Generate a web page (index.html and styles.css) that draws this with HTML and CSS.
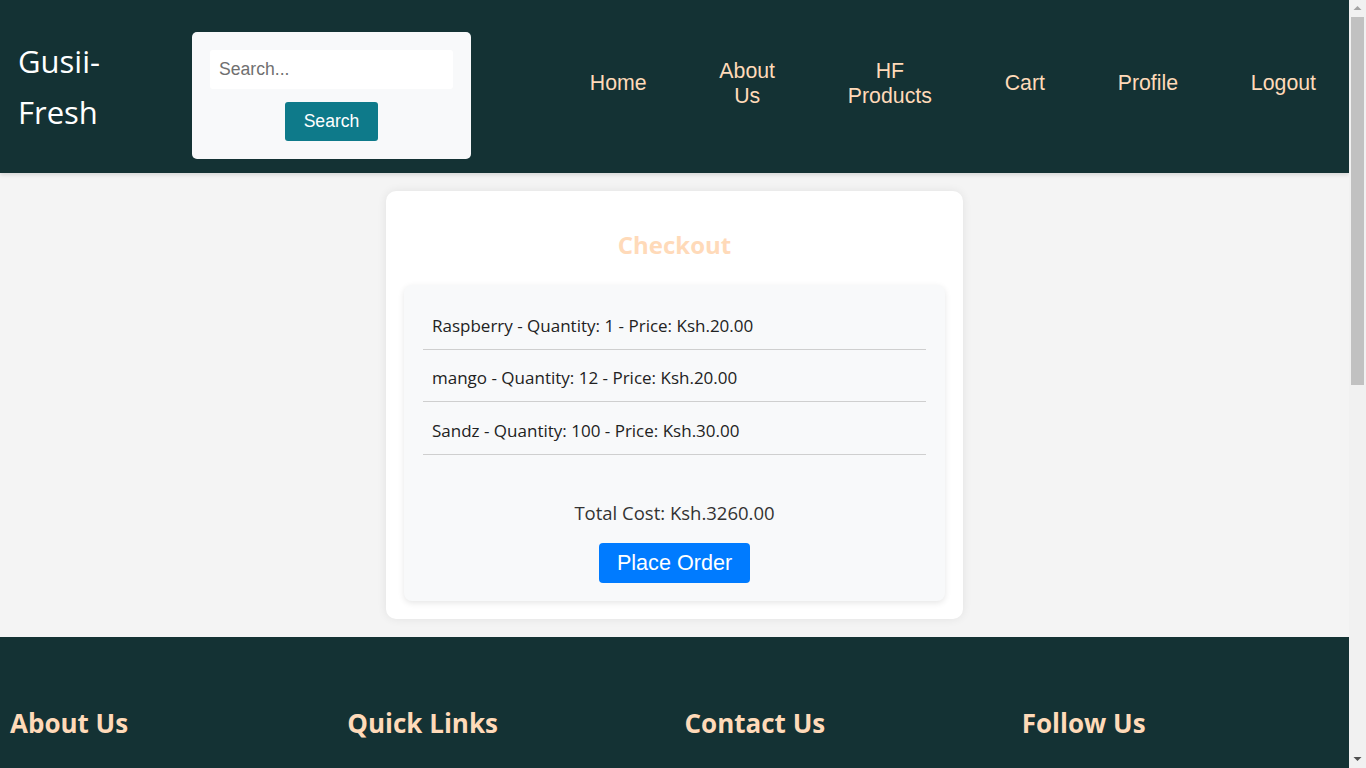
FILE: index.html
```html
<!DOCTYPE html>
<html lang="en">
<head>
<meta charset="UTF-8">
<title>Gusii-Fresh - Checkout</title>
<link rel="stylesheet" href="styles.css">
</head>
<body>
<header class="site-header">
  <div class="logo"><h1 class="logo-text">Gusii-Fresh</h1></div>
  <form class="search-box">
    <input class="search-input" type="text" placeholder="Search...">
    <button class="search-btn" type="button">Search</button>
  </form>
  <nav class="nav">
    <a class="nav-link" href="#">Home</a>
    <a class="nav-link" href="#">About Us</a>
    <a class="nav-link" href="#">HF Products</a>
    <a class="nav-link" href="#">Cart</a>
    <a class="nav-link" href="#">Profile</a>
    <a class="nav-link" href="#">Logout</a>
  </nav>
</header>

<main class="main">
  <section class="card">
    <h2 class="card-title">Checkout</h2>
    <div class="order-box">
      <ul class="order-list">
        <li class="order-item">Raspberry - Quantity: 1 - Price: Ksh.20.00</li>
        <li class="order-item">mango - Quantity: 12 - Price: Ksh.20.00</li>
        <li class="order-item">Sandz - Quantity: 100 - Price: Ksh.30.00</li>
      </ul>
      <p class="total">Total Cost: Ksh.3260.00</p>
      <button class="order-btn" type="button">Place Order</button>
    </div>
  </section>
</main>

<footer class="footer">
  <div class="footer-cols">
    <div class="footer-col">
      <h2 class="footer-title">About Us</h2>
      <p class="footer-text">we bring you the freshest farm produce straight from the farmers of Gusii land to your doorstep, at fair prices.</p>
    </div>
    <div class="footer-col">
      <h2 class="footer-title">Quick Links</h2>
      <ul class="footer-links">
        <li><a href="#">Home</a></li>
        <li><a href="#">About Us</a></li>
        <li><a href="#">HF Products</a></li>
        <li><a href="#">Cart</a></li>
      </ul>
    </div>
    <div class="footer-col">
      <h2 class="footer-title">Contact Us</h2>
      <p class="footer-text">email: info@gusiifresh.co.ke</p>
      <p class="footer-text">phone: +254 700 000 000</p>
      <p class="footer-text">Kisii, Kenya</p>
    </div>
    <div class="footer-col">
      <h2 class="footer-title">Follow Us</h2>
      <ul class="footer-links">
        <li><a href="#">Facebook</a></li>
        <li><a href="#">Twitter</a></li>
        <li><a href="#">Instagram</a></li>
      </ul>
    </div>
  </div>
  <p class="copyright">&copy; 2024 Gusii-Fresh. All rights reserved.</p>
</footer>

<div class="fake-scrollbar" aria-hidden="true">
  <svg class="sb-arrow sb-up" width="17" height="17" viewBox="0 0 17 17"><polygon points="4.5,10 8.5,6 12.5,10" fill="#a3a3a3"/></svg>
  <div class="sb-thumb"></div>
  <svg class="sb-arrow sb-down" width="17" height="17" viewBox="0 0 17 17"><polygon points="4.5,6 12.5,6 8.5,10" fill="#505050"/></svg>
</div>
</body>
</html>
```

FILE: styles.css
```css
* { box-sizing: border-box; }

html, body { margin: 0; padding: 0; }

html { background: #f1f1f1; }

body {
  margin-right: 17px;
  background: #f4f4f4;
  font-family: "Open Sans", "Noto Sans", sans-serif;
  color: #333;
}

.site-header {
  background: #143234;
  height: 173px;
  display: flex;
  align-items: center;
  box-shadow: 0 2px 4px rgba(0, 0, 0, 0.12);
  position: relative;
  z-index: 1;
}

.logo {
  width: 192px;
  padding-left: 18px;
  flex: 0 0 auto;
  align-self: center;
  padding-top: 1px;
}

.logo-text {
  width: min-content;
  margin: 0;
  font-weight: 400;
  font-size: 31px;
  line-height: 51px;
  color: #ffffff;
}

.search-box {
  flex: 0 0 auto;
  width: 279px;
  height: 127px;
  margin-top: 18px;
  background: #f8f9fa;
  border-radius: 5px;
  padding: 18px;
  display: flex;
  flex-direction: column;
  align-items: center;
  gap: 13px;
}

.search-input {
  width: 243px;
  height: 39px;
  border: none;
  border-radius: 3px;
  background: #fff;
  padding: 0 9px;
  font-family: "Liberation Sans", Arial, sans-serif;
  font-size: 17.6px;
  color: #333;
  outline: none;
}

.search-input::placeholder { color: #707070; }

.search-btn {
  height: 39px;
  width: 93px;
  border: none;
  border-radius: 3px;
  background: #0e7a8a;
  color: #fff;
  font-family: "Liberation Sans", Arial, sans-serif;
  font-size: 17.6px;
  padding: 0;
}

.nav {
  flex: 1 1 auto;
  display: flex;
  justify-content: flex-end;
  align-items: center;
  gap: 72.8px;
  padding-right: 33px;
  margin-top: -6px;
}

.nav-link {
  width: min-content;
  text-align: center;
  color: #ffdab9;
  text-decoration: none;
  font-family: "Liberation Sans", Arial, sans-serif;
  font-size: 21.3px;
  line-height: 25px;
}

.main {
  padding: 18px 0;
}

.card {
  width: 577px;
  margin: 0 auto;
  background: #fff;
  border-radius: 10px;
  padding: 18px;
  box-shadow: 0 0 10px rgba(0, 0, 0, 0.08);
}

.card-title {
  margin: 20px 0 24px;
  text-align: center;
  color: #ffdab9;
  font-size: 24px;
  font-weight: 700;
  line-height: 32px;
}

.order-box {
  background: #f8f9fa;
  border-radius: 8px;
  padding: 12px 19px 18px;
  box-shadow: 0 2px 6px rgba(0, 0, 0, 0.1);
  text-align: center;
}

.order-list {
  list-style: none;
  margin: 0 0 46px;
  padding: 0;
  text-align: left;
}

.order-item {
  padding: 16.5px 9px 11px;
  line-height: 24px;
  font-size: 17px;
  border-bottom: 1px solid #cfcfcf;
  color: #222;
}

.total {
  margin: 0 0 18px;
  font-size: 18.5px;
  line-height: 24px;
  color: #333;
}

.order-btn {
  border: none;
  border-radius: 4px;
  background: #007bff;
  color: #fff;
  font-family: "Liberation Sans", Arial, sans-serif;
  font-size: 21.6px;
  line-height: 25px;
  padding: 7px 18px 8px;
}

.footer {
  background: #143234;
  color: #fff;
  padding: 60px 0 40px;
  min-height: 875px;
}

.footer-cols {
  display: flex;
}

.footer-col {
  flex: 1 1 0;
  padding: 10px;
}

.footer-title {
  margin: 0 0 26px;
  color: #ffdab9;
  font-size: 26px;
  font-weight: 700;
  line-height: 32px;
}

.footer-text {
  margin: 0 0 12px;
  font-size: 16px;
  line-height: 24px;
  color: #f0f0f0;
}

.footer-links {
  list-style: none;
  margin: 0;
  padding: 0;
}

.footer-links li { margin-bottom: 10px; }

.footer-links a {
  color: #f0f0f0;
  text-decoration: none;
  font-size: 16px;
  line-height: 24px;
}

.copyright {
  text-align: center;
  margin: 80px 0 0;
  font-size: 14px;
  color: #ddd;
}

.fake-scrollbar {
  position: fixed;
  top: 0;
  right: 0;
  width: 17px;
  height: 100vh;
  background: #f1f1f1;
  z-index: 10;
}

.sb-arrow {
  position: absolute;
  left: 0;
  display: block;
}

.sb-up { top: 0; }
.sb-down { bottom: 0; }

.sb-thumb {
  position: absolute;
  left: 2px;
  width: 13px;
  top: 17px;
  height: 368px;
  background: #c1c1c1;
}
```
